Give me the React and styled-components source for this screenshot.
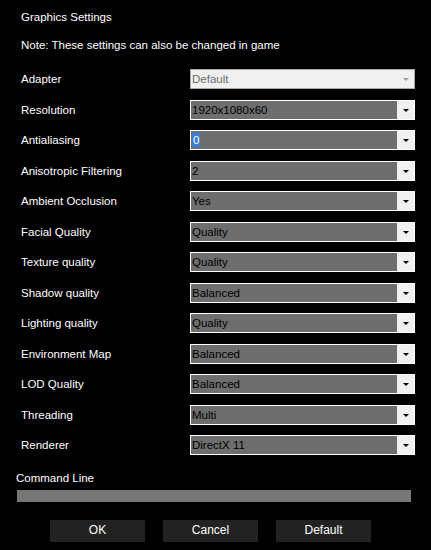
import React from "react";
import styled, { createGlobalStyle } from "styled-components";

const Global = createGlobalStyle`
  html, body { margin: 0; padding: 0; background: #000; }
  body { font-family: "Liberation Sans", Arial, sans-serif; font-size: 11.5px; }
`;

const Page = styled.div`
  width: 431px;
  height: 550px;
  background: #000;
  color: #fff;
  display: flex;
  flex-direction: column;
  overflow: hidden;
`;

const Heading = styled.div`
  margin: ${(p) => p.$top}px 0 0 21px;
  line-height: 14px;
  color: #fff;
`;

const Rows = styled.div`
  margin-top: 17px;
  display: flex;
  flex-direction: column;
  gap: 10.5px;
`;

const Row = styled.div`
  display: flex;
  align-items: center;
  height: 20px;
`;

const Label = styled.div`
  width: 169px;
  padding-left: 21px;
  line-height: 14px;
  color: #fff;
`;

const Select = styled.div`
  width: 225px;
  height: 20px;
  box-sizing: border-box;
  border: 1px solid ${(p) => (p.$disabled ? "#a8a8a8" : "#fff")};
  background: ${(p) => (p.$disabled ? "#f0f0f0" : "#6e6e6e")};
  display: flex;
`;

const Value = styled.div`
  flex: 1;
  padding-left: 1px;
  display: flex;
  align-items: center;
  color: ${(p) => (p.$disabled ? "#6d6d6d" : "#000")};
  line-height: 14px;
`;

const Highlight = styled.span`
  background: #3d7fd6;
  color: #fff;
  padding: 0 1px;
  line-height: 14px;
`;

const Arrow = styled.div`
  width: 17px;
  background: #f0f0f0;
  display: flex;
  align-items: center;
  justify-content: center;
  &::after {
    content: "";
    border-left: 3px solid transparent;
    border-right: 3px solid transparent;
    border-top: 3px solid ${(p) => (p.$disabled ? "#a0a0a0" : "#000")};
    margin-top: 1px;
  }
`;

const CmdLabel = styled.div`
  margin: 16px 0 0 16px;
  line-height: 14px;
  color: #fff;
`;

const CmdBar = styled.div`
  margin: 5px 0 0 17px;
  width: 394px;
  height: 12px;
  background: #777;
`;

const Buttons = styled.div`
  margin: 18px 0 0 50px;
  display: flex;
  gap: 18px;
`;

const Button = styled.div`
  width: 95px;
  height: 22px;
  box-sizing: border-box;
  padding-bottom: 3px;
  background: #222;
  color: #fff;
  display: flex;
  align-items: center;
  justify-content: center;
  line-height: 14px;
  font-size: 12px;
`;

const settings = [
  ["Adapter", "Default", { disabled: true }],
  ["Resolution", "1920x1080x60"],
  ["Antialiasing", "0", { selected: true }],
  ["Anisotropic Filtering", "2"],
  ["Ambient Occlusion", "Yes"],
  ["Facial Quality", "Quality"],
  ["Texture quality", "Quality"],
  ["Shadow quality", "Balanced"],
  ["Lighting quality", "Quality"],
  ["Environment Map", "Balanced"],
  ["LOD Quality", "Balanced"],
  ["Threading", "Multi"],
  ["Renderer", "DirectX 11"],
];

export default function App() {
  return (
    <>
      <Global />
      <Page>
        <Heading $top={10}>Graphics Settings</Heading>
        <Heading $top={14}>Note: These settings can also be changed in game</Heading>
        <Rows>
          {settings.map(([label, value, opts = {}]) => (
            <Row key={label}>
              <Label>{label}</Label>
              <Select $disabled={opts.disabled}>
                <Value $disabled={opts.disabled}>
                  {opts.selected ? <Highlight>{value}</Highlight> : value}
                </Value>
                <Arrow $disabled={opts.disabled} />
              </Select>
            </Row>
          ))}
        </Rows>
        <CmdLabel>Command Line</CmdLabel>
        <CmdBar />
        <Buttons>
          <Button>OK</Button>
          <Button>Cancel</Button>
          <Button>Default</Button>
        </Buttons>
      </Page>
    </>
  );
}
